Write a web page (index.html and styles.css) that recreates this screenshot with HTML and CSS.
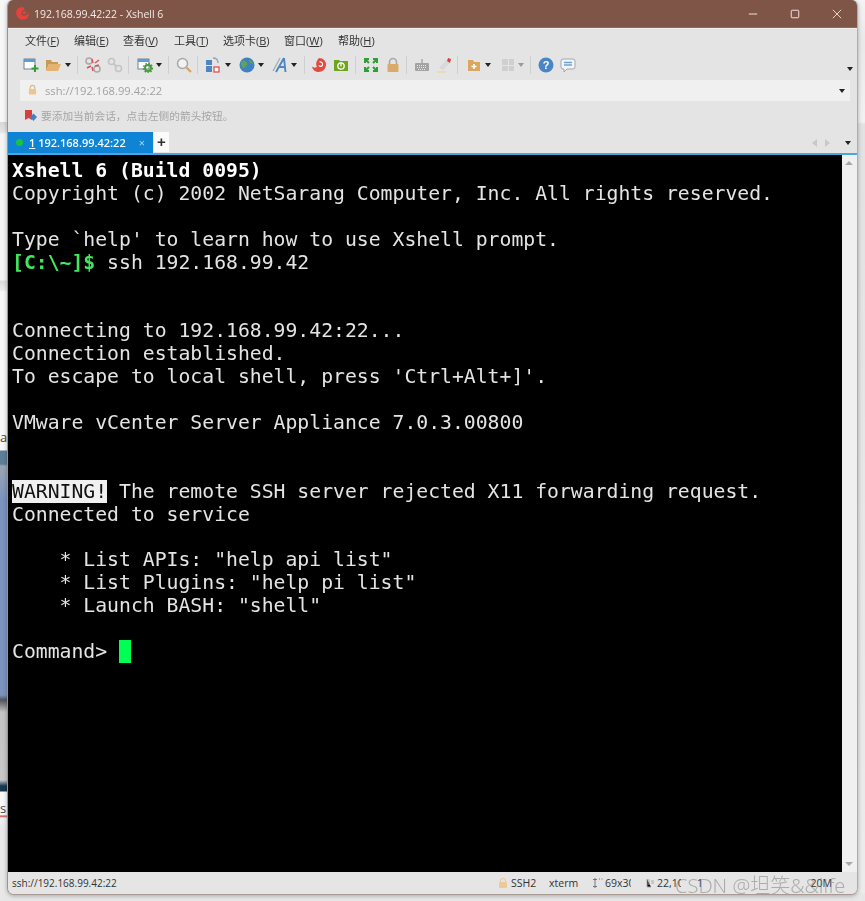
FILE: index.html
```html
<!DOCTYPE html>
<html lang="zh">
<head>
<meta charset="utf-8">
<title>192.168.99.42:22 - Xshell 6</title>
<link rel="stylesheet" href="styles.css">
</head>
<body>
<div class="desk-left"><span class="desk-a">a</span><span class="desk-s">s</span></div>
<div class="desk-right"></div>
<div class="desk-bottom"></div>
<main class="window">
  <header class="titlebar">
    <svg class="app-logo" viewBox="0 0 16 16"><path fill="#e8403a" d="M8.500 1C5 .8 2 2.600 1.300 5.500.8 8 1.800 11.600 4.500 13.600 7 15.300 11 15 13.300 12.500 15.200 10.400 15 7.500 14 6.500 14 9 12 10.500 9.500 10.500 7.500 10.500 6.500 8.500 7 6.500 7.500 5 9 4.500 10 4 9.800 2.500 9.500 1.500 8.500 1Z"/><circle cx="9.800" cy="7" r="1.800" fill="#e8403a"/></svg>
    <span class="title-text">192.168.99.42:22 - Xshell 6</span>
    <div class="win-controls">
      <svg viewBox="0 0 12 12"><path d="M1 6h10" stroke="#f1dfd9" stroke-width="1.200"/></svg>
      <svg viewBox="0 0 12 12"><rect x="1.500" y="1.500" width="9" height="9" rx="1" fill="none" stroke="#f1dfd9" stroke-width="1.200"/></svg>
      <svg viewBox="0 0 12 12"><path d="M1 1l10 10M11 1L1 11" stroke="#f1dfd9" stroke-width="1.100"/></svg>
    </div>
  </header>

  <nav class="menubar">
    <span>文件(<u>F</u>)</span><span>编辑(<u>E</u>)</span><span>查看(<u>V</u>)</span><span>工具(<u>T</u>)</span><span>选项卡(<u>B</u>)</span><span>窗口(<u>W</u>)</span><span>帮助(<u>H</u>)</span>
  </nav>

  <div class="toolbar">
    <svg class="ic" viewBox="0 0 16 16"><rect x="1" y="2" width="11" height="10" fill="#fff" stroke="#6f8292"/><rect x="1" y="2" width="11" height="3" fill="#5f9bd5"/><path d="M12 8v7M8.500 11.500h7" stroke="#3a9a35" stroke-width="2"/></svg>
    <svg class="ic g6" viewBox="0 0 16 16"><path d="M1 3h5l1 2h6v2H4L1 14Z" fill="#c79a55"/><path d="M4 7h12l-3 7H1Z" fill="#e3b36f"/></svg>
    <i class="arrow g4"></i>
    <i class="sep g6"></i>
    <svg class="ic g7" viewBox="0 0 16 16"><circle cx="4" cy="4" r="3" fill="none" stroke="#a9a9a9" stroke-width="1.500"/><circle cx="12" cy="12" r="3" fill="none" stroke="#a9a9a9" stroke-width="1.500"/><path d="M7 2l1 4M14 3l-4 3M2 11l4-2M8 14l-1-4M10 9l4-1" stroke="#d9555c" stroke-width="1.500"/></svg>
    <svg class="ic g6" viewBox="0 0 16 16"><circle cx="4.500" cy="4.500" r="3" fill="none" stroke="#c4c4c4" stroke-width="1.600"/><circle cx="11.500" cy="11.500" r="3" fill="none" stroke="#c4c4c4" stroke-width="1.600"/><path d="M6.500 6.500l3 3" stroke="#c4c4c4" stroke-width="1.800"/></svg>
    <i class="sep g5"></i>
    <svg class="ic g8" viewBox="0 0 16 16"><rect x="1" y="2" width="11" height="10" fill="#fff" stroke="#6f8292"/><rect x="1" y="2" width="11" height="3" fill="#5f9bd5"/><circle cx="11" cy="11" r="3" fill="none" stroke="#4a9a3a" stroke-width="2"/><circle cx="11" cy="11" r="4.500" fill="none" stroke="#4a9a3a" stroke-dasharray="1.500 1.500" stroke-width="1.500"/></svg>
    <i class="arrow g3"></i>
    <i class="sep g6"></i>
    <svg class="ic g7" viewBox="0 0 16 16"><circle cx="6.500" cy="6.500" r="5" fill="#f2f2f2" stroke="#a8a8a8" stroke-width="1.500"/><path d="M10.500 10.500l4.500 4.500" stroke="#d4a35c" stroke-width="2.200"/></svg>
    <i class="sep g5"></i>
    <svg class="ic g7" viewBox="0 0 16 16"><rect x="1" y="3" width="6" height="5" fill="#4f85c0"/><rect x="1" y="9" width="6" height="6" fill="#4f85c0"/><rect x="9" y="10" width="5" height="5" fill="#fff" stroke="#d9534f" stroke-width="1.300"/><path d="M8 1c3 0 5 1.500 5 5" fill="none" stroke="#9aa5ae" stroke-width="1.400"/></svg>
    <i class="arrow g4"></i>
    <svg class="ic g8" viewBox="0 0 16 16"><circle cx="8" cy="8" r="7.500" fill="#3f82bf"/><path d="M3 4c2-1 4 0 5 2s-1 3-2 4-2 2-3 0-2-4 0-6ZM10 2c2 1 4 3 4 5l-3-1Z" fill="#5da35a"/></svg>
    <i class="arrow g3"></i>
    <svg class="ic g8" viewBox="0 0 16 16"><path d="M8 1L1 14" stroke="#a3adb5" stroke-width="1.300"/><path d="M12 1L4 15M12 1l1.500 14M7 10h6.500" fill="none" stroke="#4f85c0" stroke-width="1.900"/></svg>
    <i class="arrow g3"></i>
    <i class="sep g7"></i>
    <svg class="ic g6" viewBox="0 0 16 16"><path d="M8 1c4.500 0 7 3 7 6.500C15 12 11.500 15 7.500 15 4 15 1.500 12.500 1 9.500c1.500 1.500 4 1.500 5 0C4.500 8 5 4 8 1Z" fill="#e34a40"/><path d="M8.500 5c2-.5 3.500 1 3 3-.4 1.700-3 2-3.600.4" fill="none" stroke="#fff" stroke-width="1.200"/></svg>
    <svg class="ic g6" viewBox="0 0 16 16"><path d="M1 3h5l1 1h8v10H1Z" fill="#6da51c"/><circle cx="8" cy="9" r="3.200" fill="none" stroke="#fff" stroke-width="1.300"/><path d="M8 5.500v4" stroke="#fff" stroke-width="1.300"/></svg>
    <i class="sep g6"></i>
    <svg class="ic g7" viewBox="0 0 16 16"><path d="M2 6V2h4M3 3l3 3M14 6V2h-4M13 3l-3 3M2 10v4h4M3 13l3-3M14 10v4h-4M13 13l-3-3" fill="none" stroke="#2f9e35" stroke-width="2"/></svg>
    <svg class="ic g6" viewBox="0 0 16 16"><path d="M4.500 7V5a3.500 3.500 0 0 1 7 0v2" fill="none" stroke="#a8a8a8" stroke-width="1.600"/><rect x="2.500" y="7" width="11" height="8" rx="1" fill="#d9aa6a"/></svg>
    <i class="sep g5"></i>
    <svg class="ic g7" viewBox="0 0 16 16"><rect x="1" y="6" width="14" height="8" rx="1" fill="#a3a3a3"/><path d="M8 6V2" stroke="#8a8a8a"/><path d="M3 8.500h10M3 10.500h10M4 12.500h8" stroke="#e6e6e6" stroke-dasharray="1 1"/></svg>
    <svg class="ic g6" viewBox="0 0 16 16"><path d="M3 11L10 3l4 3-7 7Z" fill="#d9d9d9"/><path d="M12 1l3 1-1 4-3-2Z" fill="#d9403a"/><path d="M1 15h9" stroke="#efd9b0" stroke-width="2"/></svg>
    <i class="sep g5"></i>
    <svg class="ic g8" viewBox="0 0 16 16"><path d="M2 3h5l1 2h6v9H2Z" fill="#dba760"/><path d="M8 7v5M5.500 9.500h5" stroke="#fff" stroke-width="1.600"/></svg>
    <i class="arrow g3"></i>
    <svg class="ic g9" viewBox="0 0 16 16"><path d="M2 2h6v6H2ZM9 2h5v6H9ZM2 9h6v5H2ZM9 9h5v5H9Z" fill="#cfcfcf"/></svg>
    <i class="arrow arrow-dim g2"></i>
    <i class="sep g6"></i>
    <svg class="ic g7" viewBox="0 0 16 16"><circle cx="8" cy="8" r="7.500" fill="#4a86c5"/><text class="help-mark" x="8" y="12">?</text></svg>
    <svg class="ic g6" viewBox="0 0 16 16"><path d="M3 2h10a2 2 0 0 1 2 2v6a2 2 0 0 1-2 2H7l-3 3v-3H3a2 2 0 0 1-2-2V4a2 2 0 0 1 2-2Z" fill="#f4f4f4" stroke="#9fa9b1"/><path d="M4 5.500h8M4 8h8" stroke="#6aa2d8" stroke-width="1.500"/></svg>
    <i class="arrow toolbar-more"></i>
  </div>

  <div class="addressbar">
    <svg class="addr-lock" viewBox="0 0 12 12"><path d="M3.500 6V4a2.500 2.500 0 0 1 5 0v2" fill="none" stroke="#d8b98a" stroke-width="1.200"/><rect x="2" y="5.500" width="8" height="6" rx="1" fill="#ecc690"/></svg>
    <span class="addr-text">ssh://192.168.99.42:22</span>
    <i class="arrow addr-drop"></i>
  </div>

  <div class="hintbar">
    <svg class="hint-ic" viewBox="0 0 12 12"><path d="M0 0h7v10L3.500 8 0 10Z" fill="#d8403c"/><path d="M5 7l3.500-3.500L12 7l-3.500 4Z" fill="#3f82c8"/></svg>
    <span>要添加当前会话，点击左侧的箭头按钮。</span>
  </div>

  <div class="tabbar">
    <div class="tab">
      <i class="tab-dot"></i>
      <span class="tab-label"><u>1</u> 192.168.99.42:22</span>
      <span class="tab-close">×</span>
    </div>
    <div class="tab-add">+</div>
    <div class="tab-nav">
      <i class="tri-left"></i>
      <i class="tri-right"></i>
      <i class="arrow tab-drop"></i>
    </div>
  </div>

  <div class="termwrap">
<pre class="terminal"><b>Xshell 6 (Build 0095)</b>
Copyright (c) 2002 NetSarang Computer, Inc. All rights reserved.

Type `help' to learn how to use Xshell prompt.
<b class="prompt">[C:\~]$</b> ssh 192.168.99.42


Connecting to 192.168.99.42:22...
Connection established.
To escape to local shell, press 'Ctrl+Alt+]'.

VMware vCenter Server Appliance 7.0.3.00800


<span class="warn">WARNING!</span> The remote SSH server rejected X11 forwarding request.
Connected to service

    * List APIs: "help api list"
    * List Plugins: "help pi list"
    * Launch BASH: "shell"

Command&gt; <span class="cursor"> </span></pre>
    <div class="scrollbar"><i class="sb-up"></i><i class="sb-down"></i></div>
  </div>

  <footer class="statusbar">
    <span class="st-conn">ssh://192.168.99.42:22</span>
    <svg class="st-lock" viewBox="0 0 10 10"><path d="M2.500 4.500V3a2.500 2.500 0 0 1 5 0v1.500" fill="none" stroke="#eec998" stroke-width="1.100"/><rect x="1" y="4" width="8" height="6" rx="1" fill="#eec998"/></svg>
    <span class="st-ssh">SSH2</span>
    <span class="st-term">xterm</span>
    <svg class="st-ic" viewBox="0 0 10 10"><path d="M2 0v10M0 1.500h4M0 8.500h4M6 1h1M8.500 1h1" stroke="#777"/></svg>
    <span class="st-size">69x30</span>
    <svg class="st-ic" viewBox="0 0 10 10"><path d="M2 1v8h4M4 1v6M6 3h3M6 5h3" stroke="#aaa"/></svg>
    <span class="st-pos">22,10</span>
    <span class="st-sess">1</span>
    <span class="st-mem">20M</span>
  </footer>
  <span class="watermark">CSDN @坦笑&amp;&amp;life</span>
</main>
</body>
</html>
```

FILE: styles.css
```css
* { box-sizing: border-box; }
html, body { margin: 0; padding: 0; height: 100%; }
body {
  width: 865px;
  height: 901px;
  position: relative;
  overflow: hidden;
  background: #f4f4f4;
  font-family: "Open Sans", "Noto Sans CJK SC", sans-serif;
}
.desk-left {
  position: absolute;
  left: 0;
  top: 0;
  width: 8px;
  height: 901px;
  background: linear-gradient(to bottom,
    #f7f7f7 0, #f7f7f7 122px, #d8d8d8 122px, #e4e4e4 132px, #f5f5f5 134px, #f5f5f5 280px,
    #dcdcdc 281px, #ececec 290px, #f8f8f8 292px, #f8f8f8 450px,
    #5e7f98 451px, #5e7f98 464px, #9aa6b4 466px, #7b93bd 500px, #7b93bd 695px,
    #53565e 700px, #c4c4c4 712px, #c8c8c8 780px, #17384f 786px, #17384f 791px,
    #f8f8f8 792px, #f8f8f8 815px, #c8444a 816px, #f0f0f0 818px, #e8e8e8 830px, #e8e8e8 901px);
}
.desk-a, .desk-s {
  position: absolute;
  left: 0;
  font: 13px "Open Sans", sans-serif;
  color: #444;
}
.desk-a { top: 428px; }
.desk-s { top: 799px; }
.desk-right {
  position: absolute;
  right: 0;
  top: 0;
  width: 8px;
  height: 901px;
  background: linear-gradient(to bottom, #f4f4f4 0, #e9e9e9 40px, #f2f2f2 122px, #e2e2e2 124px, #ececec 901px);
}
.desk-bottom {
  position: absolute;
  left: 0;
  right: 0;
  bottom: 0;
  height: 8px;
  background: #e7e7e7;
}
.window {
  position: absolute;
  left: 7px;
  top: 0;
  width: 851px;
  height: 895px;
  display: flex;
  flex-direction: column;
  background: #e4e4e4;
  border-right: 1px solid #b7aaa5;
  border-bottom: 1px solid #a99a94;
  border-left: 1px solid #a98f86;
  border-radius: 6px 6px 7px 7px;
  overflow: hidden;
  box-shadow: 0 1px 4px rgba(0, 0, 0, .28);
  filter: blur(.3px);
}
.titlebar {
  height: 28px;
  flex: none;
  display: flex;
  align-items: center;
  padding-left: 7px;
  background: #7f5548;
  border-bottom: 1px solid #8c6a60;
  color: #f4e9e5;
  font-size: 10.500px;
}
.app-logo { width: 15px; height: 15px; }
.title-text { margin-left: 4px; white-space: nowrap; }
.win-controls {
  margin-left: auto;
  margin-right: 15px;
  display: flex;
  gap: 32px;
}
.win-controls svg { width: 10px; height: 10px; }
.menubar {
  height: 24px;
  flex: none;
  display: flex;
  align-items: center;
  gap: 14px;
  padding: 0 0 2px 17px;
  font-size: 11px;
  color: #333;
  white-space: nowrap;
  border-top: 1px solid #efefef;
}
.menubar span { width: 35px; }
.menubar span:nth-child(4) { margin-left: 2px; }
.menubar span:nth-child(5) { width: 47px; }
.menubar span:nth-child(6) { width: 40px; }
.toolbar {
  height: 28px;
  flex: none;
  display: flex;
  align-items: center;
  padding: 0 0 2px 15px;
  position: relative;
}
.ic { width: 16px; height: 16px; flex: none; }
.arrow {
  width: 0;
  height: 0;
  flex: none;
  border-left: 3.500px solid transparent;
  border-right: 3.500px solid transparent;
  border-top: 4px solid #222;
}
.arrow-dim { border-top-color: #9a9a9a; }
.sep { width: 1px; height: 18px; flex: none; background: #cfcfcf; }
.g2 { margin-left: 2px; }
.g3 { margin-left: 3px; }
.g4 { margin-left: 4px; }
.g5 { margin-left: 5px; }
.g6 { margin-left: 6px; }
.g7 { margin-left: 7px; }
.g8 { margin-left: 8px; }
.g9 { margin-left: 9px; }
.help-mark {
  fill: #fff;
  font: bold 11px "Liberation Sans", sans-serif;
  text-anchor: middle;
}
.toolbar-more {
  position: absolute;
  right: 4px;
  top: 15px;
}
.addressbar {
  height: 21px;
  flex: none;
  margin: 0 7px 0 12px;
  display: flex;
  align-items: center;
  padding-left: 7px;
  background: #f0f0f0;
  font-size: 11.200px;
  color: #a2a2a2;
}
.addr-lock { width: 11px; height: 11px; margin-top: -2px; }
.addr-text { margin-left: 7px; }
.addr-drop { margin-left: auto; margin-right: 5px; }
.hintbar {
  height: 29px;
  flex: none;
  display: flex;
  align-items: center;
  padding-left: 17px;
  font-size: 10.700px;
  color: #a5a5a5;
}
.hint-ic { width: 12px; height: 12px; }
.hintbar span { margin-left: 4px; }
.tabbar {
  height: 23px;
  flex: none;
  display: flex;
  align-items: flex-end;
}
.tab {
  width: 145px;
  height: 21px;
  display: flex;
  align-items: center;
  padding-left: 8px;
  background: #0f84d4;
  color: #f4fbff;
  font-size: 11px;
  font-weight: 600;
  white-space: nowrap;
}
.tab-dot {
  width: 7px;
  height: 7px;
  border-radius: 50%;
  background: #19c43c;
}
.tab-label { margin-left: 6px; }
.tab-close {
  margin-left: auto;
  margin-right: 8px;
  font-weight: 400;
  font-size: 11px;
  color: #a8d6f3;
}
.tab-add {
  width: 15px;
  height: 20px;
  margin-left: 1px;
  margin-bottom: 1px;
  background: #fbfbfb;
  text-align: center;
  font: bold 15px/19px "Liberation Sans", sans-serif;
  color: #333;
}
.tab-nav {
  margin-left: auto;
  margin-right: 6px;
  height: 20px;
  display: flex;
  align-items: center;
}
.tri-left, .tri-right { width: 0; height: 0; border-top: 4.500px solid transparent; border-bottom: 4.500px solid transparent; }
.tri-left { border-right: 5px solid #c8c8c8; }
.tri-right { border-left: 5px solid #c8c8c8; margin-left: 8px; }
.tab-drop { margin-left: 15px; }
.termwrap {
  flex: 1;
  min-height: 0;
  display: flex;
  background: #000;
  border-top: 2px solid #48a6e4;
}
.terminal {
  flex: 1;
  margin: 0;
  padding: 5px 0 0 4px;
  font: 19.750px/22.900px "DejaVu Sans Mono", monospace;
  color: #e4e4e4;
  overflow: hidden;
}
.terminal b { font-weight: 700; color: #fff; }
.terminal b.prompt { color: #43e85c; }
.warn { background: #f0f0f0; color: #111; }
.cursor { background: #00ff55; }
.scrollbar {
  width: 15px;
  flex: none;
  position: relative;
  background: #f0f0f0;
}
.sb-up, .sb-down {
  position: absolute;
  left: 3px;
  width: 0;
  height: 0;
  border-left: 4px solid transparent;
  border-right: 4px solid transparent;
}
.sb-up { top: 6px; border-bottom: 4px solid #a8a8a8; }
.sb-down { bottom: 6px; border-top: 4px solid #a8a8a8; }
.statusbar {
  height: 22px;
  flex: none;
  display: flex;
  align-items: center;
  padding-left: 4px;
  font-size: 10.500px;
  color: #333;
  white-space: nowrap;
  background: #e5e5e5;
}
.st-conn { width: 486px; font-size: 10px; }
.st-lock { width: 10px; height: 10px; flex: none; }
.st-ssh { margin-left: 3px; width: 38px; }
.st-term { width: 44px; }
.st-ic { width: 10px; height: 10px; flex: none; margin-right: 2px; }
.st-size { width: 26px; overflow: hidden; margin-right: 14px; }
.st-pos { width: 24px; overflow: hidden; margin-right: 16px; }
.st-sess { width: 8px; }
.st-mem { margin-left: auto; margin-right: 25px; }
.watermark {
  position: absolute;
  left: 667px;
  top: 870px;
  font: 300 20px "Noto Sans", "Noto Sans CJK SC", sans-serif;
  color: rgba(125, 125, 125, .55);
  white-space: nowrap;
}
```
